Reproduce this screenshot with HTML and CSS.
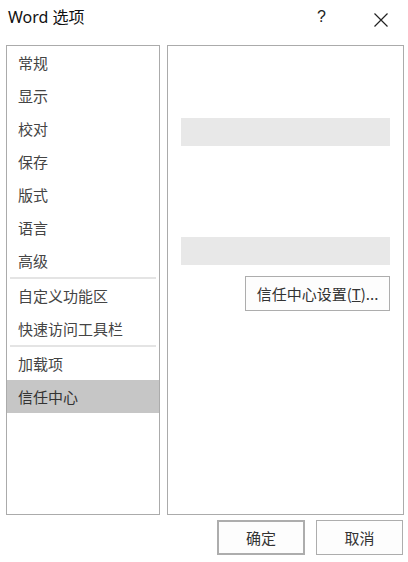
FILE: index.html
```html
<!DOCTYPE html>
<html lang="zh-CN">
<head>
<meta charset="utf-8">
<link rel="stylesheet" href="styles.css">
</head>
<body>
<div class="dialog">
  <div class="titlebar">
    <div class="title">Word 选项</div>
    <div class="help">?</div>
    <div class="close">
      <svg width="14" height="14" viewBox="0 0 14 14"><path d="M0.5 0.5L13.5 13.5M13.5 0.5L0.5 13.5" stroke="#222" stroke-width="1.2" fill="none"/></svg>
    </div>
  </div>
  <div class="main">
    <div class="nav">
      <div class="item">常规</div>
      <div class="item">显示</div>
      <div class="item">校对</div>
      <div class="item">保存</div>
      <div class="item">版式</div>
      <div class="item">语言</div>
      <div class="item">高级</div>
      <div class="sep"></div>
      <div class="item">自定义功能区</div>
      <div class="item">快速访问工具栏</div>
      <div class="sep"></div>
      <div class="item">加载项</div>
      <div class="item selected">信任中心</div>
    </div>
    <div class="content">
      <div class="bar bar1"></div>
      <div class="bar bar2"></div>
      <div class="btnrow"><button class="btn settings">信任中心设置(<u>T</u>)...</button></div>
    </div>
  </div>
  <div class="footer">
    <button class="btn ok">确定</button>
    <button class="btn cancel">取消</button>
  </div>
</div>
</body>
</html>
```
FILE: styles.css
```css
html, body {
  margin: 0;
  padding: 0;
  background: #ffffff;
}
body {
  font-family: "Noto Sans", "Noto Sans CJK SC", sans-serif;
  width: 408px;
  height: 562px;
  overflow: hidden;
}
.dialog {
  display: flex;
  flex-direction: column;
}
.titlebar {
  height: 45px;
  display: flex;
  align-items: flex-start;
  box-sizing: border-box;
  padding-top: 6px;
}
.title {
  margin-left: 8px;
  font-size: 16px;
  line-height: 22px;
  color: #111;
  flex: 1;
}
.help {
  font-family: "Liberation Sans", sans-serif;
  font-size: 16px;
  line-height: 22px;
  color: #222;
  width: 10px;
  margin-right: 47px;
}
.close {
  width: 14px;
  height: 14px;
  margin-top: 4px;
  margin-right: 20px;
}
.main {
  display: flex;
  padding-left: 6px;
  gap: 7px;
}
.nav {
  width: 154px;
  height: 470px;
  box-sizing: border-box;
  border: 1px solid #ababab;
  display: flex;
  flex-direction: column;
}
.item {
  height: 33px;
  line-height: 33px;
  padding-left: 11px;
  font-family: "Noto Sans CJK SC", sans-serif;
  font-size: 15px;
  color: #444;
}
.item.selected {
  background: #c6c6c6;
  color: #333;
}
.sep {
  height: 2px;
  margin: 0 3px;
  background: #e4e4e4;
}
.content {
  width: 237px;
  height: 470px;
  box-sizing: border-box;
  border: 1px solid #ababab;
  padding: 0 13px 0 13px;
  display: flex;
  flex-direction: column;
}
.bar {
  height: 28px;
  background: #e8e8e8;
}
.bar1 {
  margin-top: 72px;
}
.bar2 {
  margin-top: 91px;
}
.btnrow {
  display: flex;
  justify-content: flex-end;
  margin-top: 11px;
}
.btn {
  font-family: "Noto Sans CJK SC", sans-serif;
  font-size: 15px;
  color: #333;
  background: #fdfdfd;
  border: 1px solid #adadad;
  box-sizing: border-box;
  height: 35px;
  padding: 0;
  margin: 0;
}
.settings {
  width: 145px;
}
.footer {
  display: flex;
  justify-content: flex-end;
  gap: 11px;
  padding-right: 5px;
  margin-top: 5px;
}
.ok {
  width: 88px;
  border: 2px solid #adadad;
}
.cancel {
  width: 87px;
}
```
